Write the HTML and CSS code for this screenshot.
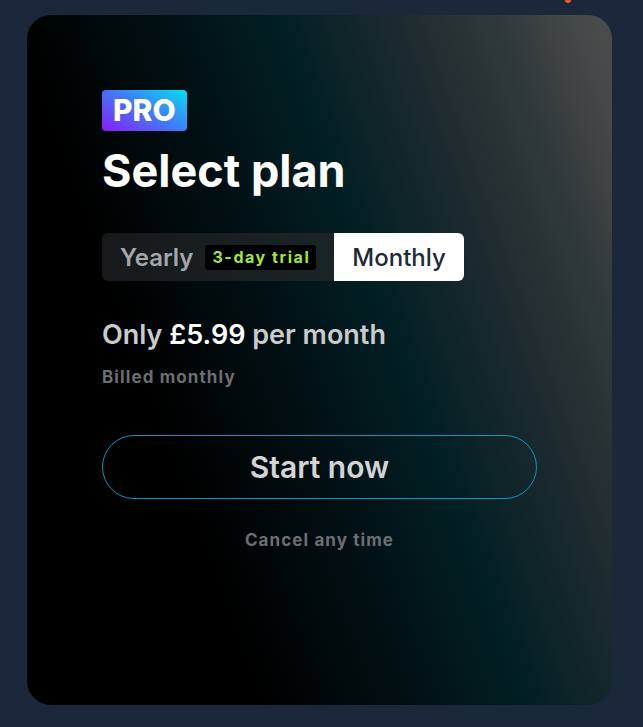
FILE: index.html
```html
<!DOCTYPE html>
<html lang="en">
<head>
<meta charset="utf-8">
<title>Select plan</title>
<link rel="stylesheet" href="styles.css">
</head>
<body>
<div class="page">
  <span class="spark"></span>
  <section class="card">
    <span class="pro">PRO</span>
    <h1 class="title">Select plan</h1>
    <div class="toggle">
      <button class="opt opt-yearly">Yearly <span class="trial">3-day trial</span></button>
      <button class="opt opt-monthly">Monthly</button>
    </div>
    <p class="price">Only <strong>£5.99</strong> per month</p>
    <p class="billed">Billed monthly</p>
    <button class="start">Start now</button>
    <p class="cancel">Cancel any time</p>
  </section>
</div>
</body>
</html>
```
FILE: styles.css
```css
* { box-sizing: border-box; }
html, body { margin: 0; padding: 0; }
body {
  background: #1b283b;
  font-family: Inter, "Noto Sans", sans-serif;
  width: 643px;
  height: 727px;
  overflow: hidden;
}
.page {
  position: relative;
  padding: 15px 31px 22px 27px;
}
.spark {
  position: absolute;
  left: 565px;
  top: -3px;
  width: 6px;
  height: 6px;
  border-radius: 50%;
  background: #f05a28;
}
.card {
  width: 585px;
  height: 690px;
  border-radius: 24px;
  padding: 75px 75px;
  background: linear-gradient(250deg, #4c4e4e 0%, #454848 5%, #323a3b 13%, #1e2b2f 25%, #021f24 40%, #010e11 56%, #000 72%, #000 100%);
  display: flex;
  flex-direction: column;
  align-items: flex-start;
}
.pro {
  display: inline-block;
  height: 41px;
  padding: 0 11px;
  line-height: 41px;
  font-size: 30px;
  font-weight: 800;
  color: #fff;
  border-radius: 4px;
  background: linear-gradient(30deg, #8b1cf7 0%, #3b82f6 55%, #06e0f4 100%);
}
.title {
  margin: 12px 0 0;
  font-size: 45px;
  line-height: 56px;
  font-weight: 700;
  color: #fff;
}
.toggle {
  margin-top: 34px;
  display: flex;
  height: 48px;
  border-radius: 6px;
  background: linear-gradient(90deg, #17191b 0%, #1c2a2d 100%);
}
.opt {
  border: 0;
  font-family: inherit;
  font-size: 24px;
  cursor: pointer;
  display: flex;
  align-items: center;
  height: 48px;
  border-radius: 6px;
}
.opt-yearly {
  background: transparent;
  color: #a3a6aa;
  font-weight: 600;
  padding: 0 18px 0 18px;
  gap: 12px;
}
.trial {
  background: #000;
  color: #a3e635;
  font-size: 16px;
  font-weight: 700;
  letter-spacing: 1.55px;
  padding: 0 6px 0 7px;
  height: 25px;
  line-height: 25px;
  border-radius: 3px;
}
.opt-monthly {
  background: #fff;
  color: #1f2937;
  font-weight: 500;
  padding: 0 18px;
  border-radius: 0 6px 6px 0;
}
.price {
  margin: 38px 0 0;
  font-size: 27px;
  line-height: 32px;
  font-weight: 600;
  color: #c9cbcd;
}
.price strong { color: #fff; font-weight: 600; }
.billed {
  margin: 16px 0 0;
  font-size: 17px;
  font-weight: 700;
  letter-spacing: 1.1px;
  color: #6b6f73;
}
.start {
  margin-top: 48px;
  width: 435px;
  height: 64px;
  border: 1.5px solid #0b95c3;
  border-radius: 32px;
  background: transparent;
  color: #d2d4d6;
  font-family: inherit;
  font-size: 30px;
  font-weight: 600;
  cursor: pointer;
}
.cancel {
  margin: 31px 0 0;
  width: 435px;
  text-align: center;
  font-size: 17px;
  font-weight: 700;
  letter-spacing: 1.1px;
  color: #6b6f73;
}
```
